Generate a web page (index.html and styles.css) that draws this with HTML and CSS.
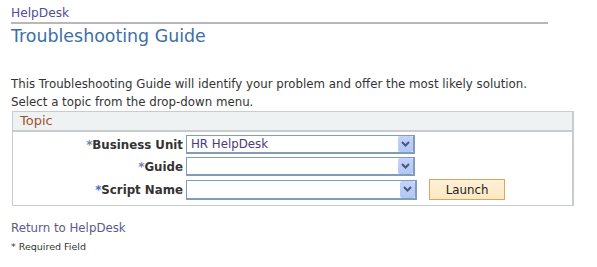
FILE: index.html
```html
<!DOCTYPE html>
<html lang="en">
<head>
    <meta charset="UTF-8">
    <title>Troubleshooting Guide</title>
    <link rel="stylesheet" href="styles.css">
</head>
<body>
    <div class="page">
        <a class="crumb" href="#">HelpDesk</a>
        <h1 class="title">Troubleshooting Guide</h1>

        <p class="intro">This Troubleshooting Guide will identify your problem and offer the most likely solution.<br>
        Select a topic from the drop-down menu.</p>

        <div class="topic-box">
            <div class="topic-head">Topic</div>
            <div class="topic-body">
                <label class="field-label" for="bu"><span class="req">*</span>Business Unit</label>
                <div class="select-wrap">
                    <select id="bu"><option>HR HelpDesk</option></select>
                    <span class="arrow"><svg width="9" height="6" viewBox="0 0 9 6"><path d="M1 1 L4.5 4.5 L8 1" fill="none" stroke="#4a5878" stroke-width="2"/></svg></span>
                </div>
                <span></span>

                <label class="field-label" for="guide"><span class="req">*</span>Guide</label>
                <div class="select-wrap">
                    <select id="guide"><option></option></select>
                    <span class="arrow"><svg width="9" height="6" viewBox="0 0 9 6"><path d="M1 1 L4.5 4.5 L8 1" fill="none" stroke="#4a5878" stroke-width="2"/></svg></span>
                </div>
                <span></span>

                <label class="field-label" for="script"><span class="req blue">*</span>Script Name</label>
                <div class="select-wrap wide">
                    <select id="script"><option></option></select>
                    <span class="arrow"><svg width="9" height="6" viewBox="0 0 9 6"><path d="M1 1 L4.5 4.5 L8 1" fill="none" stroke="#4a5878" stroke-width="2"/></svg></span>
                </div>
                <button class="launch" type="button">Launch</button>
            </div>
        </div>

        <a class="back" href="#">Return to HelpDesk</a>
        <div class="required">* Required Field</div>
    </div>
</body>
</html>
```
FILE: styles.css
```css
body {
    margin: 0;
    font-family: "DejaVu Sans", Verdana, sans-serif;
    font-size: 11.8px;
    color: #333;
    background: #fff;
}
.page {
    padding: 6px 0 0 11px;
    width: 563px;
}
.crumb {
    display: block;
    width: 537px;
    color: #514c9c;
    text-decoration: none;
    font-size: 12.2px;
    line-height: 15px;
    padding-bottom: 1px;
    border-bottom: 2px solid #b8b8b8;
}
.title {
    margin: 2px 0 0;
    font-size: 17.4px;
    font-weight: normal;
    color: #3d6ea8;
    line-height: 21px;
}
.intro {
    margin: 28px 0 0;
    line-height: 18px;
}
.topic-box {
    margin-top: 0;
    margin-left: 1px;
    border: 1px solid #c8ccd0;
    border-right-width: 2px;
    width: 559px;
}
.topic-head {
    background: #eef2f3;
    color: #a0522d;
    font-size: 13px;
    line-height: 18px;
    padding-left: 7px;
    border-bottom: 2px solid #c8ccd0;
}
.topic-body {
    display: grid;
    grid-template-columns: 170px auto 1fr;
    align-items: center;
    column-gap: 3px;
    row-gap: 3px;
    padding: 3px 0 5px;
}
.field-label {
    text-align: right;
    font-weight: bold;
    color: #333;
}
.req {
    color: #6a84b0;
}
.req.blue {
    color: #3a6fc0;
}
.select-wrap {
    position: relative;
    width: 229px;
    height: 19px;
}
.select-wrap.wide {
    width: 231px;
    height: 20px;
}
.select-wrap select {
    appearance: none;
    -webkit-appearance: none;
    width: 100%;
    height: 100%;
    margin: 0;
    border-style: solid;
    border-width: 1px 2px 2px 1px;
    border-color: #7f9db9;
    background: #fff;
    font-family: "DejaVu Sans", Verdana, sans-serif;
    font-size: 11.8px;
    color: #4a3a7a;
    padding: 0 0 0 4px;
    border-radius: 0;
}
.arrow {
    position: absolute;
    right: 2px;
    top: 1px;
    width: 15px;
    bottom: 2px;
    display: flex;
    align-items: center;
    justify-content: center;
    background: linear-gradient(#c4d3fb, #b2c6f5);
    border-radius: 2px;
    pointer-events: none;
}
.launch {
    justify-self: start;
    margin-left: 9px;
    width: 76px;
    height: 21px;
    border: 1px solid #d9a55f;
    background: linear-gradient(#fff0d6, #fde8c2);
    font-family: "DejaVu Sans", Verdana, sans-serif;
    font-size: 11.8px;
    color: #222;
    padding: 0;
}
.back {
    display: block;
    margin-top: 15px;
    color: #5a5a8a;
    text-decoration: none;
    line-height: 14px;
}
.required {
    margin-top: 6px;
    font-size: 9.5px;
    color: #333;
}
```
